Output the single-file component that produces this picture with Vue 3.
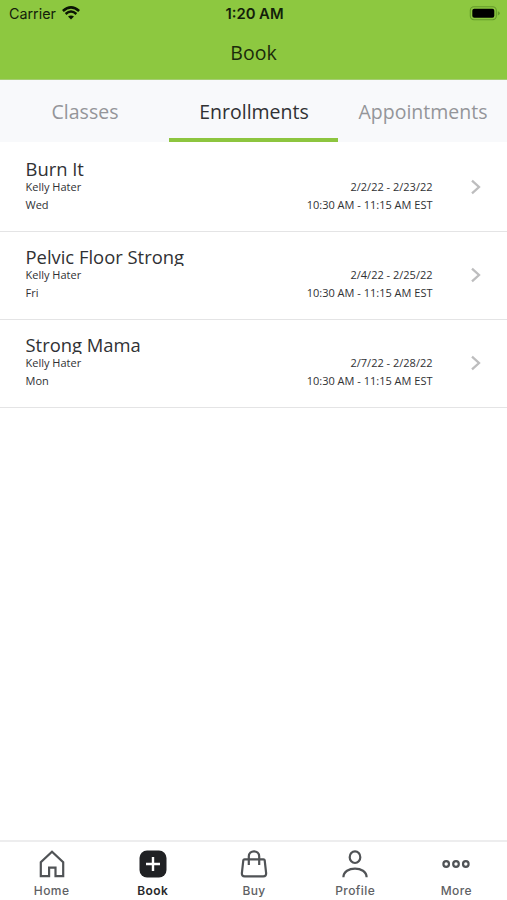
<script setup>
const tabs = ['Classes', 'Enrollments', 'Appointments']
const activeTab = 'Enrollments'
const sessions = [
  { title: 'Burn It', teacher: 'Kelly Hater', day: 'Wed', dates: '2/2/22 - 2/23/22', time: '10:30 AM - 11:15 AM EST' },
  { title: 'Pelvic Floor Strong', teacher: 'Kelly Hater', day: 'Fri', dates: '2/4/22 - 2/25/22', time: '10:30 AM - 11:15 AM EST' },
  { title: 'Strong Mama', teacher: 'Kelly Hater', day: 'Mon', dates: '2/7/22 - 2/28/22', time: '10:30 AM - 11:15 AM EST' },
]
const nav = ['Home', 'Book', 'Buy', 'Profile', 'More']
</script>

<template>
  <div class="screen">
    <header class="header">
      <div class="status">
        <div class="carrier">
          <span>Carrier</span>
          <svg width="18" height="14" viewBox="0 0 18 14">
            <path d="M9 13.5 L6 10.5 Q9 8.3 12 10.5 Z" fill="#0b1504" />
            <path d="M3.6 8 Q9 3.2 14.4 8" fill="none" stroke="#0b1504" stroke-width="2.4" />
            <path d="M.9 5 Q9 -2.2 17.1 5" fill="none" stroke="#0b1504" stroke-width="2.6" />
          </svg>
        </div>
        <div class="clock">1:20 AM</div>
        <svg class="battery" width="31" height="15" viewBox="0 0 31 15">
          <rect x="1.3" y=".8" width="26" height="12.9" rx="3.6" fill="none" stroke="#649a2a" stroke-width="1.1" />
          <rect x="3.3" y="2.8" width="22" height="8.9" rx="2" fill="#000" />
          <path d="M28.8 5.2 Q30.8 5.8 30.8 7.3 Q30.8 8.8 28.8 9.4 Z" fill="#649a2a" />
        </svg>
      </div>
      <h1>Book</h1>
    </header>

    <nav class="tabs">
      <div v-for="t in tabs" :key="t" class="tab" :class="{ active: t === activeTab }"><span>{{ t }}</span></div>
    </nav>

    <main class="list">
      <article v-for="s in sessions" :key="s.title" class="row">
        <div class="info">
          <h2>{{ s.title }}</h2>
          <div class="line"><span>{{ s.teacher }}</span><span>{{ s.dates }}</span></div>
          <div class="line"><span>{{ s.day }}</span><span class="time">{{ s.time }}</span></div>
        </div>
        <svg class="chevron" width="12" height="16" viewBox="0 0 12 16">
          <path d="M2 1.6 L9 8 L2 14.4" fill="none" stroke="#bdbdbe" stroke-width="2.3" />
        </svg>
      </article>
    </main>

    <footer class="bottom">
      <div v-for="n in nav" :key="n" class="item" :class="{ current: n === 'Book' }">
        <svg width="30" height="30" viewBox="0 0 30 30" fill="none" stroke="#505356" stroke-width="2.2">
          <path v-if="n === 'Home'" d="M3.8 27.2 V13.2 L15 2.8 L26.2 13.2 V27.2 H18.5 V18.6 H12.1 V27.2 Z" />
          <template v-else-if="n === 'Book'">
            <rect x="1.5" y="1.5" width="27" height="27" rx="7.5" fill="#202124" stroke="none" />
            <path d="M15 8 V22 M8 15 H22" stroke="#fff" stroke-width="2.4" />
          </template>
          <template v-else-if="n === 'Buy'">
            <path d="M5.5 10.3 H24.5 Q25.5 10.3 25.7 11.3 L27.1 23.8 Q27.4 27.4 24.3 27.4 H5.7 Q2.6 27.4 2.9 23.8 L4.3 11.3 Q4.5 10.3 5.5 10.3 Z" />
            <path d="M9.8 16 V7.5 C9.8 .7 20.2 .7 20.2 7.5 V16" />
          </template>
          <template v-else-if="n === 'Profile'">
            <ellipse cx="15" cy="8.2" rx="5.3" ry="5.8" />
            <path d="M3.4 28.3 C3.4 16.7 26.6 16.7 26.6 28.3" />
          </template>
          <template v-else>
            <circle cx="5.2" cy="15" r="2.8" />
            <circle cx="15" cy="15" r="2.8" />
            <circle cx="24.8" cy="15" r="2.8" />
          </template>
        </svg>
        <span>{{ n }}</span>
      </div>
    </footer>
  </div>
</template>

<style>
body { background: #fff; }
</style>

<style scoped>
.screen { width: 507px; height: 900px; display: flex; flex-direction: column; background: #fff; overflow: hidden; font-family: "Open Sans", "Noto Sans", sans-serif; color: #303134; }
.header { height: 79px; background: #8dc840; border-bottom: 1px solid #a5cd73; box-sizing: content-box; flex: none; }
.status { height: 27px; display: grid; grid-template-columns: 1fr auto 1fr; align-items: center; padding: 0 7px 0 9px; font-family: Inter, sans-serif; color: #13200a; }
.carrier { display: flex; align-items: center; gap: 6px; font-size: 14.3px; }
.carrier svg { margin-top: -2px; }
.clock { font-size: 14.8px; font-weight: 600; }
.battery { justify-self: end; }
h1 { margin: 12px 0 0; text-align: center; font-size: 19.5px; line-height: 28px; font-weight: 400; color: #1b2b0b; }
.tabs { flex: none; height: 62px; display: grid; grid-template-columns: repeat(3, 1fr); background: #f8f9fb; }
.tab { display: flex; align-items: center; justify-content: center; font-size: 19.5px; color: #949599; border-bottom: 4px solid transparent; padding: 4px 0 0 1px; box-sizing: border-box; }
.tab.active { color: #303134; border-bottom-color: #8dc53f; }
.list { flex: 1; padding-top: 2px; }
.row { height: 88px; box-sizing: border-box; border-bottom: 1.5px solid #e4e4e5; display: flex; padding: 14px 25px 0 25.5px; }
.info { width: 407px; }
h2 { margin: 0; height: 20px; line-height: 21px; overflow: hidden; font-size: 18.4px; font-weight: 400; }
.line { display: flex; justify-content: space-between; font-size: 11px; line-height: 17.5px; }
.chevron { margin: 21px 0 0 37.5px; }
.bottom { flex: none; height: 60px; box-sizing: border-box; border-top: 2px solid #ededee; display: grid; grid-template-columns: repeat(5, 1fr); font-family: Inter, sans-serif; font-size: 12px; font-weight: 500; color: #606164; letter-spacing: .4px; padding-left: 1px; }
.item { display: flex; flex-direction: column; align-items: center; padding-top: 6.5px; gap: 4.5px; line-height: 15px; }
.current { color: #29292b; font-weight: 600; }
</style>
